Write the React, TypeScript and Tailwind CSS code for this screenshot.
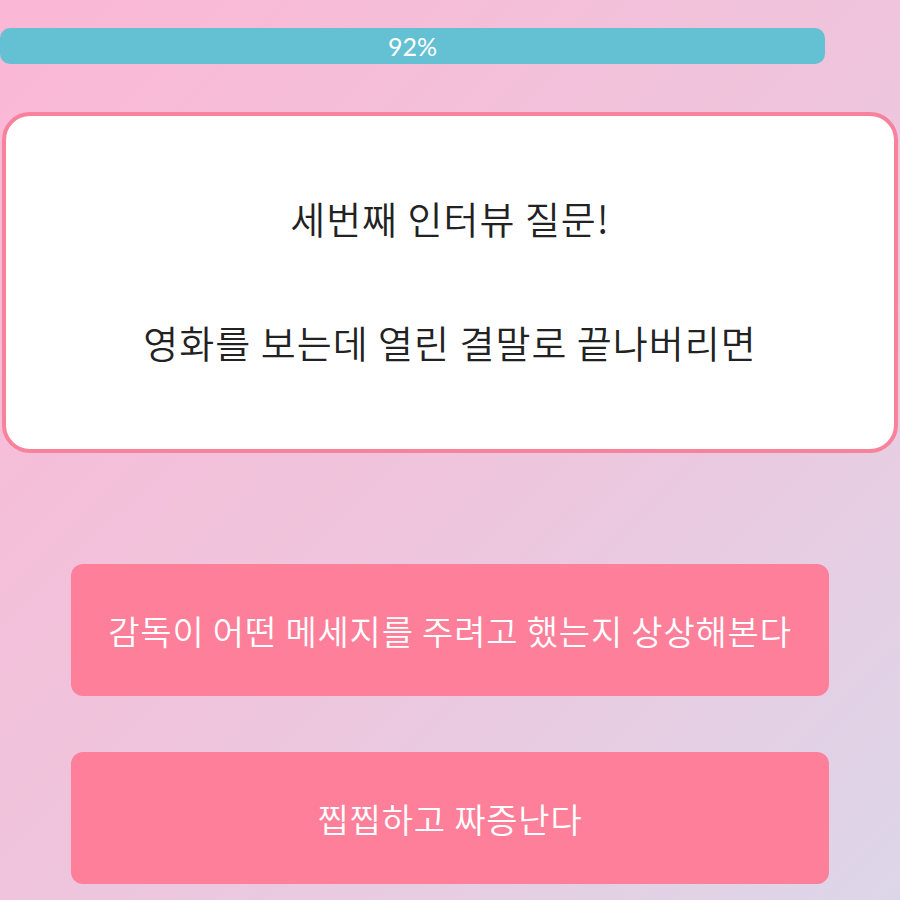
const font = { fontFamily: '"Noto Sans CJK KR", "Noto Sans", sans-serif' }

const choices = ['감독이 어떤 메세지를 주려고 했는지 상상해본다', '찝찝하고 짜증난다']

export default function App() {
  return (
    <div
      style={font}
      className="min-h-[900px] w-full bg-gradient-to-br from-[#fbb7d6] via-[#efc4dc] to-[#ddd6e9] pt-[28px]"
    >
      <div className="flex h-[36px] w-[825px] items-center justify-center rounded-[10px] bg-[#64c1d3] text-white">
        <span className="font-['Lato',sans-serif] text-[25px] leading-none">92%</span>
      </div>

      <div className="mx-[2px] mt-[48px] flex h-[341px] items-center justify-center rounded-[28px] border-4 border-[#f8819b] bg-white">
        <p className="mb-[6px] whitespace-pre-line text-center text-[38px] font-[350] leading-[62px] tracking-[1px] text-[#222222]">
          {'세번째 인터뷰 질문!\n\n영화를 보는데 열린 결말로 끝나버리면'}
        </p>
      </div>

      <div className="mt-[111px] flex flex-col items-center gap-[56px]">
        {choices.map((c) => (
          <button
            key={c}
            className="flex h-[132px] w-[758px] items-center justify-center rounded-[12px] bg-[#fd7f9a] text-[34px] font-[350] tracking-[0.8px] text-white"
          >
            {c}
          </button>
        ))}
      </div>
    </div>
  )
}
